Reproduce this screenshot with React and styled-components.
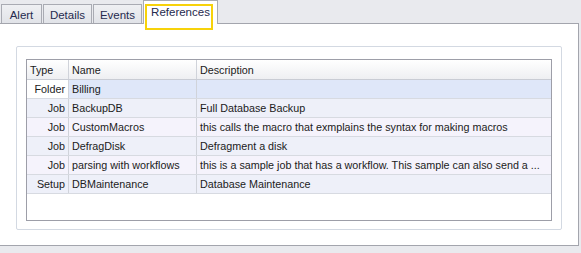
import React from "react";
import styled, { createGlobalStyle } from "styled-components";

const GlobalStyle = createGlobalStyle`
	html, body {
		margin: 0;
		padding: 0;
		background: #e9eaee;
		font-family: "Segoe UI", "Liberation Sans", Arial, sans-serif;
		font-size: 10.75px;
	}
`;

const Window = styled.div`
	width: 581px;
	height: 253px;
	overflow: hidden;
	background: #e9eaee;
`;

const TabStrip = styled.div`
	display: flex;
	align-items: flex-end;
	gap: 1px;
	height: 23px;
	padding-left: 1px;
	position: relative;
	z-index: 1;
`;

const Tab = styled.div`
	position: relative;
	box-sizing: border-box;
	display: flex;
	align-items: center;
	justify-content: center;
	width: ${(props) => props.width}px;
	height: ${(props) => (props.active ? 24 : 19)}px;
	margin-bottom: ${(props) => (props.active ? -1 : 0)}px;
	padding-top: ${(props) => (props.active ? 0 : 1)}px;
	padding-bottom: ${(props) => (props.active ? 1 : 0)}px;
	border: 1px solid #a9abb3;
	border-bottom: none;
	background: ${(props) =>
		props.active ? "#ffffff" : "linear-gradient(#eff0f3, #e1e3e8)"};
	color: #262a4e;
	font-size: 11.5px;
`;

const Focus = styled.div`
	position: absolute;
	left: 1px;
	top: 3px;
	width: 68px;
	height: 26px;
	box-sizing: border-box;
	border: 2px solid #f7d20a;
	pointer-events: none;
`;

const Panel = styled.div`
	box-sizing: border-box;
	margin-left: -1px;
	width: 580px;
	height: 223px;
	border: 1px solid #a3a5ad;
	background: #ffffff;
	padding: 22px 0 0 16px;
`;

const GroupBox = styled.div`
	box-sizing: border-box;
	width: 546px;
	height: 184px;
	border: 1px solid #d3d9e2;
	border-radius: 2px;
	padding: 12px 0 0 9px;
`;

const Grid = styled.div`
	box-sizing: border-box;
	width: 526px;
	height: 162px;
	border: 1px solid #9d9ea8;
	background: #ffffff;
`;

const Row = styled.div`
	display: grid;
	grid-template-columns: 42px 128px 1fr;
	height: ${(props) => (props.header ? 20 : 19)}px;
	box-sizing: border-box;
	border-bottom: 1px solid ${(props) => (props.header ? "#c9ccd4" : "#d7dae1")};
	background: ${(props) =>
		props.header
			? "linear-gradient(#ffffff, #eeeff2)"
			: props.odd
			? "#f5f3fc"
			: "#eef0f9"};
	color: #1b1b1b;
`;

const Cell = styled.div`
	box-sizing: border-box;
	display: flex;
	align-items: center;
	justify-content: ${(props) => (props.right ? "flex-end" : "flex-start")};
	padding: ${(props) => (props.right ? "0 3px 0 0" : "0 0 0 3px")};
	border-right: ${(props) => (props.last ? "none" : "1px solid #d0d3da")};
	background: ${(props) => props.bg || "transparent"};
	white-space: nowrap;
	overflow: hidden;
	min-width: 0;
`;

const rows = [
	["Folder", "Billing", ""],
	["Job", "BackupDB", "Full Database Backup"],
	["Job", "CustomMacros", "this calls the macro that exmplains the syntax for making macros"],
	["Job", "DefragDisk", "Defragment a disk"],
	[
		"Job",
		"parsing with workflows",
		"this is a sample job that has a workflow. This sample can also send a ...",
	],
	["Setup", "DBMaintenance", "Database Maintenance"],
];

function App() {
	return (
		<Window>
			<GlobalStyle />
			<TabStrip>
				<Tab width={41}>Alert</Tab>
				<Tab width={49}>Details</Tab>
				<Tab width={49}>Events</Tab>
				<Tab width={75} active>
					References
					<Focus />
				</Tab>
			</TabStrip>
			<Panel>
				<GroupBox>
					<Grid>
						<Row header>
							<Cell>Type</Cell>
							<Cell>Name</Cell>
							<Cell last>Description</Cell>
						</Row>
						{rows.map((r, i) => {
							const selected = i === 0;
							return (
								<Row key={r[1]} odd={i % 2 === 0}>
									<Cell right bg={selected ? "#ffffff" : null}>
										{r[0]}
									</Cell>
									<Cell bg={selected ? "#dfe7f9" : null}>{r[1]}</Cell>
									<Cell last bg={selected ? "#dfe7f9" : null}>
										{r[2]}
									</Cell>
								</Row>
							);
						})}
					</Grid>
				</GroupBox>
			</Panel>
		</Window>
	);
}

export default App;
